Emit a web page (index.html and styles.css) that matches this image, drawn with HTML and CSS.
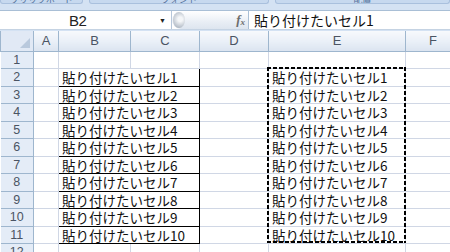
FILE: index.html
```html
<!DOCTYPE html>
<html lang="ja">
<head>
<meta charset="utf-8">
<link rel="stylesheet" href="styles.css">
</head>
<body>
<div class="app">
  <div class="ribbon">
    <div class="group g1"><span>クリップボード</span></div>
    <div class="group g2"><span>フォント</span></div>
    <div class="group g3"><span>配置</span></div>
  </div>
  <div class="fbar">
    <div class="namebox"><span class="ref">B2</span><span class="drop">▼</span></div>
    <div class="fxzone"><span class="knob"></span><span class="fx">f<sub>x</sub></span></div>
    <div class="input">貼り付けたいセル1</div>
  </div>
  <table class="sheet">
    <colgroup>
      <col class="c0"><col class="ca"><col class="cb"><col class="cc"><col class="cd"><col class="ce"><col class="cf">
    </colgroup>
    <thead>
      <tr><th class="corner"><span class="tri"></span></th><th>A</th><th>B</th><th>C</th><th>D</th><th>E</th><th>F</th></tr>
    </thead>
    <tbody>
      <tr><th>1</th><td></td><td></td><td></td><td></td><td></td><td></td></tr>
      <tr><th>2</th><td></td><td class="box first" colspan="2">貼り付けたいセル1</td><td></td><td class="ecell e2">貼り付けたいセル1<span class="ants"></span></td><td></td></tr>
      <tr><th>3</th><td></td><td class="box" colspan="2">貼り付けたいセル2</td><td></td><td class="ecell">貼り付けたいセル2</td><td></td></tr>
      <tr><th>4</th><td></td><td class="box" colspan="2">貼り付けたいセル3</td><td></td><td class="ecell">貼り付けたいセル3</td><td></td></tr>
      <tr><th>5</th><td></td><td class="box" colspan="2">貼り付けたいセル4</td><td></td><td class="ecell">貼り付けたいセル4</td><td></td></tr>
      <tr><th>6</th><td></td><td class="box" colspan="2">貼り付けたいセル5</td><td></td><td class="ecell">貼り付けたいセル5</td><td></td></tr>
      <tr><th>7</th><td></td><td class="box" colspan="2">貼り付けたいセル6</td><td></td><td class="ecell">貼り付けたいセル6</td><td></td></tr>
      <tr><th>8</th><td></td><td class="box" colspan="2">貼り付けたいセル7</td><td></td><td class="ecell">貼り付けたいセル7</td><td></td></tr>
      <tr><th>9</th><td></td><td class="box" colspan="2">貼り付けたいセル8</td><td></td><td class="ecell">貼り付けたいセル8</td><td></td></tr>
      <tr><th>10</th><td></td><td class="box" colspan="2">貼り付けたいセル9</td><td></td><td class="ecell">貼り付けたいセル9</td><td></td></tr>
      <tr><th>11</th><td></td><td class="box" colspan="2">貼り付けたいセル10</td><td></td><td class="ecell">貼り付けたいセル10</td><td></td></tr>
      <tr><th>12</th><td></td><td></td><td></td><td></td><td></td><td></td></tr>
    </tbody>
  </table>
</div>
</body>
</html>
```
FILE: styles.css
```css
html, body {
  margin: 0;
  padding: 0;
  background: #ffffff;
}
.app {
  width: 450px;
  height: 252px;
  overflow: hidden;
  background: #d4e2f3;
  font-family: "Liberation Sans", Arial, sans-serif;
}
.ribbon {
  height: 10px;
  display: flex;
  gap: 6px;
  background: #d4e2f3;
}
.group {
  height: 3px;
  border: 1px solid #a9c0dd;
  border-top: none;
  border-radius: 0 0 3px 3px;
  background: #c7d9ef;
  overflow: hidden;
}
.group span {
  display: block;
  font-family: "Noto Sans CJK JP", sans-serif;
  font-size: 9px;
  line-height: 9px;
  color: #4f6f98;
  margin-top: -5px;
  text-align: center;
}
.g1 { width: 81px; }
.g2 { width: 178px; }
.g3 { flex: 1; }
.fbar {
  height: 18px;
  display: flex;
  background: #ffffff;
  border-top: 1px solid #a9bfd6;
  border-bottom: 1px solid #c5d3e3;
}
.namebox {
  width: 171px;
  display: flex;
  align-items: center;
  border-right: 1px solid #b6c7db;
}
.ref {
  margin-left: 69px;
  font-size: 15px;
  color: #222;
  letter-spacing: -0.5px;
}
.drop {
  margin-left: auto;
  margin-right: 5px;
  font-size: 7px;
  color: #222;
}
.fxzone {
  width: 76px;
  display: flex;
  align-items: center;
  background: linear-gradient(#ffffff, #e9eef5 60%, #dde5ef);
  border-right: 1px solid #a9bfd6;
  border-radius: 9px 0 0 9px;
}
.knob {
  width: 12px;
  height: 16px;
  margin-left: 1px;
  border-radius: 50%;
  background: radial-gradient(circle at 60% 45%, #f4f6f8 20%, #b9c1cb 70%, #8e99a6 100%);
}
.fx {
  margin-left: auto;
  margin-right: 3px;
  font-family: "Liberation Serif", serif;
  font-style: italic;
  font-weight: bold;
  font-size: 13px;
  color: #6d6d6d;
}
.fx sub {
  font-size: 9px;
  vertical-align: -1px;
}
.input {
  flex: 1;
  padding-left: 5px;
  font-family: "Noto Sans CJK JP", sans-serif;
  font-size: 14px;
  line-height: 18px;
  color: #111;
}
.sheet {
  border-collapse: collapse;
  table-layout: fixed;
  width: 460px;
  background: #ffffff;
  margin-top: 1px;
}
.c0 { width: 33px; }
.ca { width: 25px; }
.cb { width: 72px; }
.cc { width: 69px; }
.cd { width: 69px; }
.ce { width: 137px; }
.cf { width: 55px; }
.sheet thead tr { height: 20px; }
.sheet tbody tr { height: 17.5px; }
.sheet thead th {
  padding: 0;
  font-weight: normal;
  font-size: 13px;
  line-height: 14px;
  color: #4a5463;
  background: linear-gradient(#f7f9fc, #e9eff7 55%, #dbe4f0);
  border: 1px solid #9eb6ce;
  border-top: none;
  text-align: center;
}
.sheet thead th.corner {
  position: relative;
  background: #e1e9f5;
}
.tri {
  position: absolute;
  right: 3px;
  bottom: 3px;
  width: 0;
  height: 0;
  border-left: 10px solid transparent;
  border-bottom: 10px solid #b9c9dd;
}
.sheet tbody th {
  padding: 0;
  font-weight: normal;
  font-size: 12.5px;
  line-height: 14px;
  color: #4a5463;
  background: #e4ecf7;
  border: 1px solid #9eb6ce;
  border-top: none;
  border-left: none;
  text-align: center;
}
.sheet td {
  padding: 0 0 0 3px;
  border: 1px solid #d0d7e5;
  font-family: "Noto Sans CJK JP", sans-serif;
  font-size: 13.5px;
  line-height: 16px;
  color: #111;
  white-space: nowrap;
  overflow: visible;
}
.sheet td.box {
  border: 1px solid #000000;
}
.e2 {
  position: relative;
}
.ants {
  position: absolute;
  left: -2px;
  top: -2px;
  width: calc(100% + 3px);
  height: 176px;
  pointer-events: none;
  background:
    repeating-linear-gradient(90deg, #000 0 4px, transparent 4px 6px) top left / 100% 2px no-repeat,
    repeating-linear-gradient(90deg, #000 0 4px, transparent 4px 6px) bottom left / 100% 2px no-repeat,
    repeating-linear-gradient(180deg, #000 0 4px, transparent 4px 6px) top left / 2px 100% no-repeat,
    repeating-linear-gradient(180deg, #000 0 4px, transparent 4px 6px) top right / 2px 100% no-repeat;
}
```
